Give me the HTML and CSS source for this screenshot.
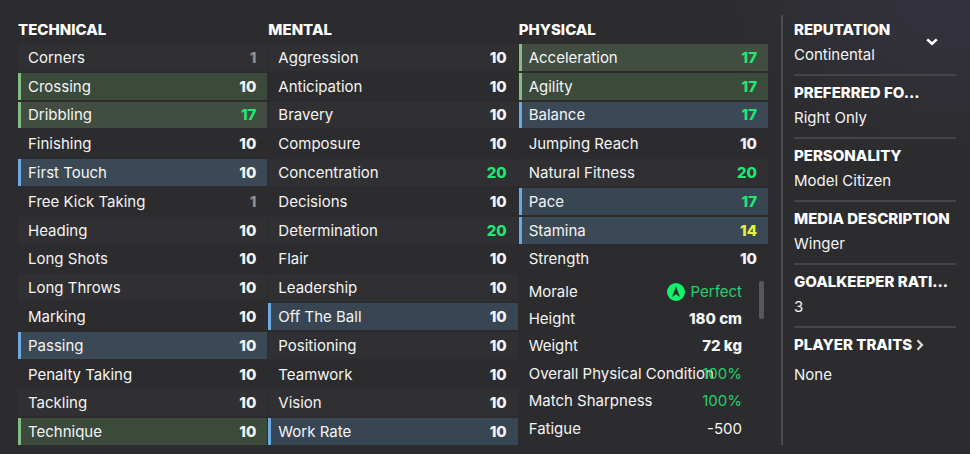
FILE: index.html
```html
<!DOCTYPE html>
<html lang="en">
<head>
<meta charset="utf-8">
<title>Player attributes</title>
<link rel="stylesheet" href="styles.css">
</head>
<body>
<div class="panel">
<main class="attributes">
<section class="group">
<h2>TECHNICAL</h2>
<table class="ratings" aria-label="Technical"><tbody>
<tr><th scope="row">Corners</th><td class="low">1</td></tr>
<tr class="key"><th scope="row">Crossing</th><td>10</td></tr>
<tr class="key"><th scope="row">Dribbling</th><td class="high">17</td></tr>
<tr><th scope="row">Finishing</th><td>10</td></tr>
<tr class="useful"><th scope="row">First Touch</th><td>10</td></tr>
<tr><th scope="row">Free Kick Taking</th><td class="low">1</td></tr>
<tr><th scope="row">Heading</th><td>10</td></tr>
<tr><th scope="row">Long Shots</th><td>10</td></tr>
<tr><th scope="row">Long Throws</th><td>10</td></tr>
<tr><th scope="row">Marking</th><td>10</td></tr>
<tr class="useful"><th scope="row">Passing</th><td>10</td></tr>
<tr><th scope="row">Penalty Taking</th><td>10</td></tr>
<tr><th scope="row">Tackling</th><td>10</td></tr>
<tr class="key"><th scope="row">Technique</th><td>10</td></tr>
</tbody></table>
</section>
<section class="group">
<h2>MENTAL</h2>
<table class="ratings" aria-label="Mental"><tbody>
<tr><th scope="row">Aggression</th><td>10</td></tr>
<tr><th scope="row">Anticipation</th><td>10</td></tr>
<tr><th scope="row">Bravery</th><td>10</td></tr>
<tr><th scope="row">Composure</th><td>10</td></tr>
<tr><th scope="row">Concentration</th><td class="high">20</td></tr>
<tr><th scope="row">Decisions</th><td>10</td></tr>
<tr><th scope="row">Determination</th><td class="high">20</td></tr>
<tr><th scope="row">Flair</th><td>10</td></tr>
<tr><th scope="row">Leadership</th><td>10</td></tr>
<tr class="useful"><th scope="row">Off The Ball</th><td>10</td></tr>
<tr><th scope="row">Positioning</th><td>10</td></tr>
<tr><th scope="row">Teamwork</th><td>10</td></tr>
<tr><th scope="row">Vision</th><td>10</td></tr>
<tr class="useful"><th scope="row">Work Rate</th><td>10</td></tr>
</tbody></table>
</section>
<section class="group">
<h2>PHYSICAL</h2>
<table class="ratings ratings-short" aria-label="Physical"><tbody>
<tr class="key"><th scope="row">Acceleration</th><td class="high">17</td></tr>
<tr class="key"><th scope="row">Agility</th><td class="high">17</td></tr>
<tr class="useful"><th scope="row">Balance</th><td class="high">17</td></tr>
<tr><th scope="row">Jumping Reach</th><td>10</td></tr>
<tr><th scope="row">Natural Fitness</th><td class="high">20</td></tr>
<tr class="useful"><th scope="row">Pace</th><td class="high">17</td></tr>
<tr class="useful"><th scope="row">Stamina</th><td class="mid">14</td></tr>
<tr><th scope="row">Strength</th><td>10</td></tr>
</tbody></table>
<table class="condition" aria-label="Condition"><tbody>
<tr><th scope="row">Morale</th><td class="good"><svg class="morale" viewBox="0 0 18 18" aria-hidden="true"><circle cx="9" cy="9" r="9" fill="#12f26c"/><path d="M9 3.2 13 14 9 11.2 5 14Z" fill="#2b302d"/></svg>Perfect</td></tr>
<tr><th scope="row">Height</th><td class="measure">180 cm</td></tr>
<tr><th scope="row">Weight</th><td class="measure">72 kg</td></tr>
<tr><th scope="row">Overall Physical Condition</th><td class="good">100%</td></tr>
<tr><th scope="row">Match Sharpness</th><td class="good">100%</td></tr>
<tr><th scope="row">Fatigue</th><td>-500</td></tr>
</tbody></table>
</section>
</main>
<aside class="profile">
<button class="toggle" type="button" aria-label="Expand"><svg viewBox="0 0 12 8" aria-hidden="true"><path d="M1.2 1.4 6 5.8 10.8 1.4" fill="none" stroke="#fff" stroke-width="2.6"/></svg></button>
<section class="fact"><h2>REPUTATION</h2><p>Continental</p></section>
<section class="fact"><h2>PREFERRED FO...</h2><p>Right Only</p></section>
<section class="fact"><h2>PERSONALITY</h2><p>Model Citizen</p></section>
<section class="fact"><h2>MEDIA DESCRIPTION</h2><p>Winger</p></section>
<section class="fact"><h2>GOALKEEPER RATI...</h2><p>3</p></section>
<section class="fact traits"><h2><a href="#traits">PLAYER TRAITS<svg viewBox="0 0 8 12" aria-hidden="true"><path d="M1.5 1.2 6 6 1.5 10.8" fill="none" stroke="#ddd" stroke-width="2.2"/></svg></a></h2><p id="traits">None</p></section>
</aside>
</div>
</body>
</html>
```

FILE: styles.css
```css
* {
  box-sizing: border-box;
}

body {
  margin: 0;
  background: #2c2c2e;
  color: #f4f4f4;
  font: 15px/20px Inter, sans-serif;
}

h2,
p {
  margin: 0;
}

h2 {
  color: #fff;
  font-size: 15px;
  line-height: 20px;
  font-weight: 800;
  white-space: nowrap;
}

.panel {
  display: grid;
  grid-template-columns: 30fr 7fr;
  gap: 13px;
  min-height: 100vh;
  padding: 15px 14px 9px 18px;
  background: radial-gradient(ellipse 260px 160px at 100% 0, #35323f, #2c2c2e00);
}

.attributes {
  display: grid;
  grid-template-columns: repeat(3, minmax(0, 1fr));
  gap: 1px;
}

.group {
  display: grid;
  grid-template-rows: 27px repeat(14, minmax(20px, 1fr));
  row-gap: 2px;
}

.group h2 {
  padding-top: 5px;
}

.ratings,
.ratings tbody {
  display: grid;
  grid-row: 2 / -1;
  grid-template-rows: subgrid;
}

.ratings-short {
  grid-row: 2 / 10;
}

.ratings tbody {
  grid-row: 1 / -1;
}

tr {
  display: flex;
  align-items: center;
  justify-content: space-between;
}

th,
td {
  padding: 1px 0 0;
  font-weight: 400;
  text-align: left;
  white-space: nowrap;
}

.ratings tr {
  padding: 0 11px 0 7px;
  border-left: 3px solid transparent;
}

.ratings tr:nth-child(odd) {
  background: #303032;
}

.ratings td {
  font-weight: 800;
}

.ratings .key {
  background: #3c4a3b;
  border-color: #82bd84;
}

.ratings .key:nth-child(odd) {
  background: #404d40;
}

.ratings .useful {
  background: #384654;
  border-color: #6aa9e4;
}

.ratings .useful:nth-child(odd) {
  background: #3b4956;
}

.ratings .low {
  color: #8f8f90;
}

.ratings .mid {
  color: #e5f23c;
}

.ratings .high {
  color: #20e874;
}

.condition {
  position: relative;
  display: block;
  grid-row: 10 / -1;
  padding: 3px 26px 3px 10px;
}

.condition::after {
  content: "";
  position: absolute;
  top: 7px;
  right: 4px;
  width: 5px;
  height: 38px;
  border-radius: 2px;
  background: #58585a;
}

.condition tbody {
  display: grid;
  grid-auto-rows: 1fr;
  height: 100%;
}

.condition th {
  width: 0;
}

.condition td {
  display: flex;
  align-items: center;
  gap: 6px;
}

.condition .good {
  color: #20d26c;
}

.condition .measure {
  font-weight: 800;
}

.morale {
  width: 18px;
  height: 18px;
}

.profile {
  position: relative;
  padding-left: 11px;
  border-left: 2px solid #4c4c4f;
}

.fact {
  display: grid;
  gap: 5px;
  padding: 7px 0 9px;
  border-bottom: 2px solid #454548;
}

.fact:first-of-type {
  padding-top: 5px;
}

.traits {
  gap: 10px;
  border-bottom: 0;
}

.traits a {
  display: flex;
  align-items: center;
  gap: 4px;
  color: inherit;
  text-decoration: none;
}

.traits svg {
  width: 8px;
  height: 12px;
}

.toggle {
  position: absolute;
  top: 17px;
  right: 12px;
  display: flex;
  padding: 6px;
  border: 0;
  background: none;
}

.toggle svg {
  width: 12px;
  height: 8px;
}
```
